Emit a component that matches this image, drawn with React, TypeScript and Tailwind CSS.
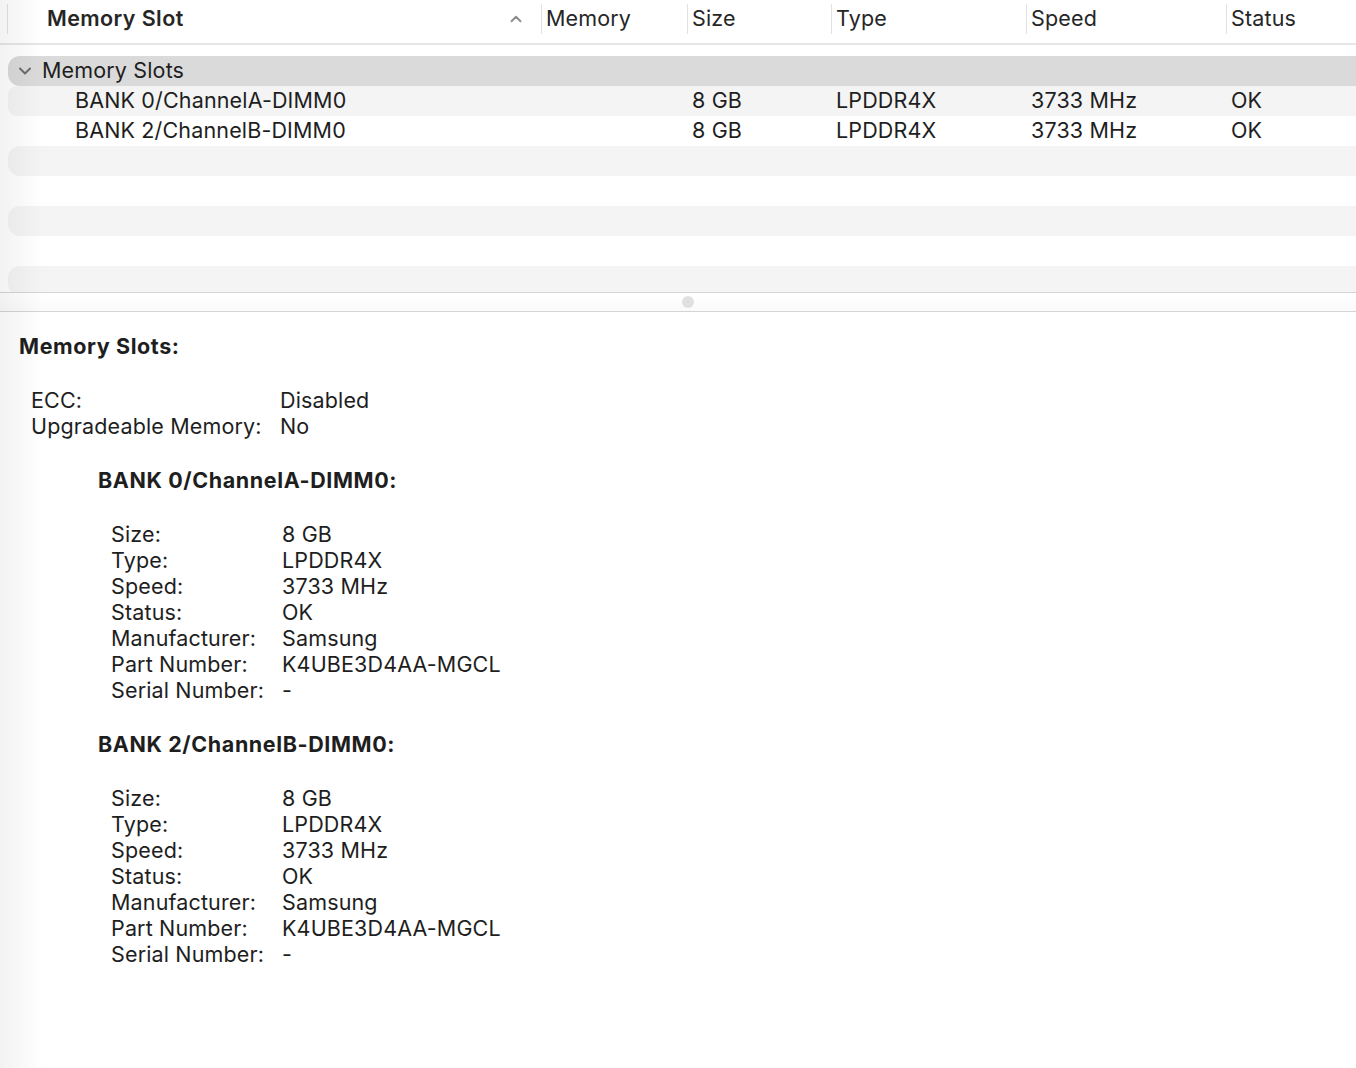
import { ChevronDown, ChevronUp } from "lucide-react";

type Slot = {
  name: string;
  size: string;
  type: string;
  speed: string;
  status: string;
  manufacturer: string;
  part: string;
  serial: string;
};

const slots: Slot[] = [
  {
    name: "BANK 0/ChannelA-DIMM0",
    size: "8 GB",
    type: "LPDDR4X",
    speed: "3733 MHz",
    status: "OK",
    manufacturer: "Samsung",
    part: "K4UBE3D4AA-MGCL",
    serial: "-",
  },
  {
    name: "BANK 2/ChannelB-DIMM0",
    size: "8 GB",
    type: "LPDDR4X",
    speed: "3733 MHz",
    status: "OK",
    manufacturer: "Samsung",
    part: "K4UBE3D4AA-MGCL",
    serial: "-",
  },
];

const HeaderCell = ({ label, className }: { label: string; className: string }) => (
  <div className={`flex h-[30px] items-center border-l border-[#e2e2e2] pb-[1px] pl-[4px] ${className}`}>
    {label}
  </div>
);

const Row = ({ slot, striped }: { slot: Slot; striped: boolean }) => (
  <div
    className={`ml-[8px] flex h-[30px] items-center rounded-l-[9px] pb-[2px] ${
      striped ? "bg-[#f4f4f4]" : "bg-white"
    }`}
  >
    <div className="w-[533px] pl-[67px]">{slot.name}</div>
    <div className="w-[146px]" />
    <div className="w-[144px] pl-[5px]">{slot.size}</div>
    <div className="w-[195px] pl-[5px]">{slot.type}</div>
    <div className="w-[200px] pl-[5px]">{slot.speed}</div>
    <div className="pl-[5px]">{slot.status}</div>
  </div>
);

const InfoLine = ({ label, value, labelWidth }: { label: string; value: string; labelWidth: string }) => (
  <div className="flex h-[26px] items-center">
    <div className={labelWidth}>{label}</div>
    <div>{value}</div>
  </div>
);

export default function App() {
  return (
    <div
      className="relative h-[1068px] w-[1356px] overflow-hidden bg-white text-[21.5px] tracking-[0.15px] text-[#1e1e1e]"
      style={{ fontFamily: "Inter, 'Liberation Sans', sans-serif" }}
    >
      {/* table header */}
      <div className="flex h-[45px] items-start border-b-2 border-[#e6e6e6] pt-[4px] text-[#262626]">
        <div className="h-[30px] w-[8px] border-r border-[#e2e2e2]" />
        <div className="flex h-[30px] w-[533px] items-center justify-between pb-[1px] pl-[39px] pr-[16px] font-semibold tracking-[0.4px]">
          <span>Memory Slot</span>
          <ChevronUp className="size-[18px] text-[#8e8e8e]" strokeWidth={2.6} />
        </div>
        <HeaderCell label="Memory" className="w-[146px]" />
        <HeaderCell label="Size" className="w-[144px]" />
        <HeaderCell label="Type" className="w-[195px]" />
        <HeaderCell label="Speed" className="w-[200px]" />
        <HeaderCell label="Status" className="flex-1" />
      </div>

      {/* outline rows */}
      <div className="h-[247px] overflow-hidden pt-[11px]">
        <div className="ml-[8px] flex h-[30px] items-center rounded-l-[12px] bg-[#dadada] pb-[2px]">
          <ChevronDown className="ml-[7px] mt-[2px] size-[20px] text-[#6c6c6c]" strokeWidth={2.4} />
          <span className="ml-[7px]">Memory Slots</span>
        </div>
        {slots.map((slot, i) => (
          <Row key={slot.name} slot={slot} striped={i % 2 === 0} />
        ))}
        {[0, 1, 2, 3, 4].map((i) => (
          <div
            key={i}
            className={`ml-[8px] h-[30px] rounded-l-[12px] ${i % 2 === 0 ? "bg-[#f4f4f4]" : "bg-white"}`}
          />
        ))}
      </div>

      {/* split view divider */}
      <div className="flex h-[20px] items-center justify-center border-y border-[#d4d4d4] bg-gradient-to-b from-white to-[#fafafa]">
        <div className="ml-[20px] size-[12px] rounded-full bg-[#e0e0e0]" />
      </div>

      {/* detail pane */}
      <div className="pl-[19px] pt-[19px]">
        <div className="flex h-[30px] items-center font-bold tracking-[0.6px]">Memory Slots:</div>
        <div className="mt-[26px] pl-[12px]">
          <InfoLine label="ECC:" value="Disabled" labelWidth="w-[249px]" />
          <InfoLine label="Upgradeable Memory:" value="No" labelWidth="w-[249px]" />
        </div>
        {slots.map((slot) => (
          <div key={slot.name} className="pl-[79px]">
            <div className="mt-[28px] flex h-[26px] items-center font-bold tracking-[0.6px]">{slot.name}:</div>
            <div className="mt-[28px] pl-[13px]">
              <InfoLine label="Size:" value={slot.size} labelWidth="w-[171px]" />
              <InfoLine label="Type:" value={slot.type} labelWidth="w-[171px]" />
              <InfoLine label="Speed:" value={slot.speed} labelWidth="w-[171px]" />
              <InfoLine label="Status:" value={slot.status} labelWidth="w-[171px]" />
              <InfoLine label="Manufacturer:" value={slot.manufacturer} labelWidth="w-[171px]" />
              <InfoLine label="Part Number:" value={slot.part} labelWidth="w-[171px]" />
              <InfoLine label="Serial Number:" value={slot.serial} labelWidth="w-[171px]" />
            </div>
          </div>
        ))}
      </div>

      {/* soft edge shading on the left */}
      <div className="pointer-events-none absolute inset-y-0 left-0 w-[44px] bg-gradient-to-r from-black/[0.05] to-transparent" />
    </div>
  );
}
